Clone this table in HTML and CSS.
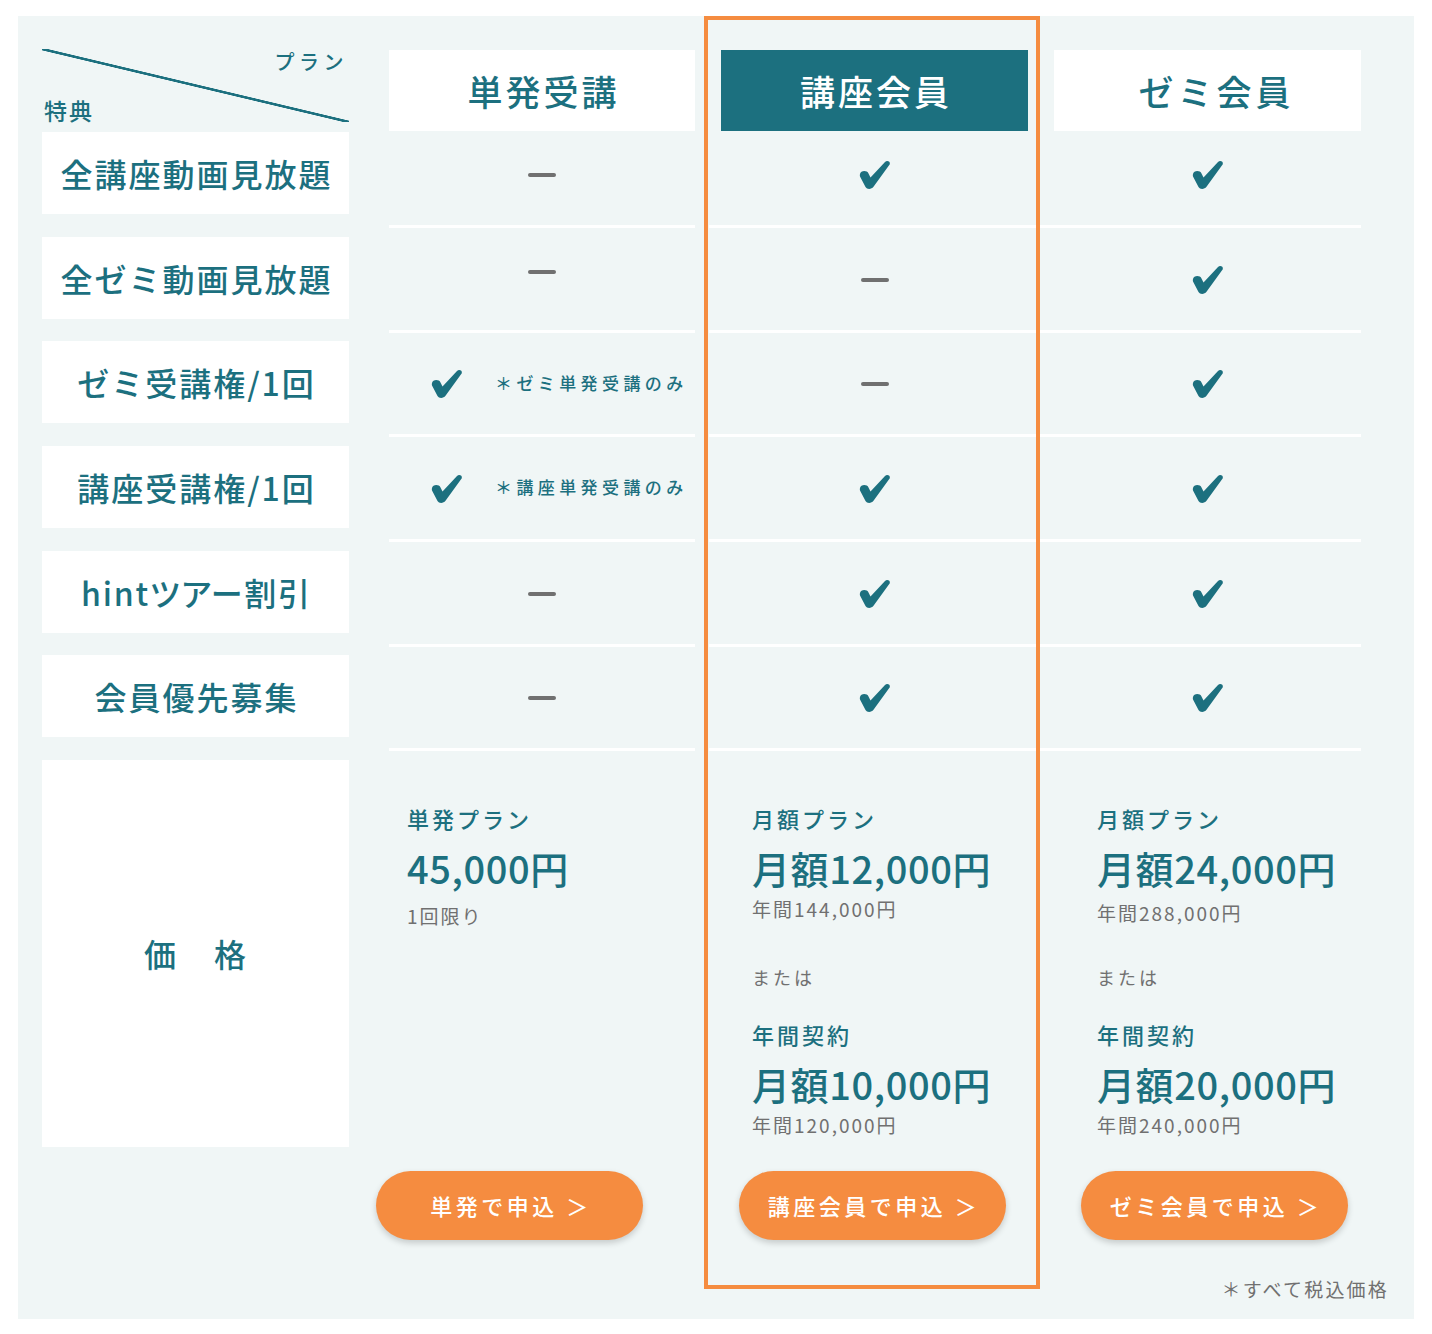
FILE: index.html
```html
<!DOCTYPE html>
<html lang="ja">
<head>
<meta charset="utf-8">
<title>プラン比較</title>
<link rel="stylesheet" href="styles.css">
</head>
<body>
<div class="panel">
  <div class="grid">
    <div class="corner"><span class="corner-plan">プラン</span><span class="corner-perk">特典</span></div>
    <div class="plan-head">単発受講</div>
    <div class="plan-head plan-head--active">講座会員</div>
    <div class="plan-head plan-head--last">ゼミ会員</div>

    <div class="perk">全講座動画見放題</div>
    <div class="cell"><span class="dash"></span></div>
    <div class="cell cell--mid"><svg class="check" viewBox="0 0 32 30"><path d="M1 14 C1.5 10.5 8 10 9.5 13.5 L11.5 17.5 L26 2 C28 0 31.5 1.5 30.8 4.2 L14.5 26.8 C12.5 29.5 8 29.7 6.5 27 L1 16.5 C0.7 15.8 0.8 14.8 1 14 Z"/></svg></div>
    <div class="cell"><svg class="check" viewBox="0 0 32 30"><path d="M1 14 C1.5 10.5 8 10 9.5 13.5 L11.5 17.5 L26 2 C28 0 31.5 1.5 30.8 4.2 L14.5 26.8 C12.5 29.5 8 29.7 6.5 27 L1 16.5 C0.7 15.8 0.8 14.8 1 14 Z"/></svg></div>

    <div class="perk">全ゼミ動画見放題</div>
    <div class="cell"><span class="dash dash--up"></span></div>
    <div class="cell cell--mid"><span class="dash"></span></div>
    <div class="cell"><svg class="check" viewBox="0 0 32 30"><path d="M1 14 C1.5 10.5 8 10 9.5 13.5 L11.5 17.5 L26 2 C28 0 31.5 1.5 30.8 4.2 L14.5 26.8 C12.5 29.5 8 29.7 6.5 27 L1 16.5 C0.7 15.8 0.8 14.8 1 14 Z"/></svg></div>

    <div class="perk">ゼミ受講権/1回</div>
    <div class="cell cell--note"><svg class="check" viewBox="0 0 32 30"><path d="M1 14 C1.5 10.5 8 10 9.5 13.5 L11.5 17.5 L26 2 C28 0 31.5 1.5 30.8 4.2 L14.5 26.8 C12.5 29.5 8 29.7 6.5 27 L1 16.5 C0.7 15.8 0.8 14.8 1 14 Z"/></svg><span class="note-text">＊ゼミ単発受講のみ</span></div>
    <div class="cell cell--mid"><span class="dash"></span></div>
    <div class="cell"><svg class="check" viewBox="0 0 32 30"><path d="M1 14 C1.5 10.5 8 10 9.5 13.5 L11.5 17.5 L26 2 C28 0 31.5 1.5 30.8 4.2 L14.5 26.8 C12.5 29.5 8 29.7 6.5 27 L1 16.5 C0.7 15.8 0.8 14.8 1 14 Z"/></svg></div>

    <div class="perk">講座受講権/1回</div>
    <div class="cell cell--note"><svg class="check" viewBox="0 0 32 30"><path d="M1 14 C1.5 10.5 8 10 9.5 13.5 L11.5 17.5 L26 2 C28 0 31.5 1.5 30.8 4.2 L14.5 26.8 C12.5 29.5 8 29.7 6.5 27 L1 16.5 C0.7 15.8 0.8 14.8 1 14 Z"/></svg><span class="note-text">＊講座単発受講のみ</span></div>
    <div class="cell cell--mid"><svg class="check" viewBox="0 0 32 30"><path d="M1 14 C1.5 10.5 8 10 9.5 13.5 L11.5 17.5 L26 2 C28 0 31.5 1.5 30.8 4.2 L14.5 26.8 C12.5 29.5 8 29.7 6.5 27 L1 16.5 C0.7 15.8 0.8 14.8 1 14 Z"/></svg></div>
    <div class="cell"><svg class="check" viewBox="0 0 32 30"><path d="M1 14 C1.5 10.5 8 10 9.5 13.5 L11.5 17.5 L26 2 C28 0 31.5 1.5 30.8 4.2 L14.5 26.8 C12.5 29.5 8 29.7 6.5 27 L1 16.5 C0.7 15.8 0.8 14.8 1 14 Z"/></svg></div>

    <div class="perk perk--latin">hintツアー割引</div>
    <div class="cell"><span class="dash"></span></div>
    <div class="cell cell--mid"><svg class="check" viewBox="0 0 32 30"><path d="M1 14 C1.5 10.5 8 10 9.5 13.5 L11.5 17.5 L26 2 C28 0 31.5 1.5 30.8 4.2 L14.5 26.8 C12.5 29.5 8 29.7 6.5 27 L1 16.5 C0.7 15.8 0.8 14.8 1 14 Z"/></svg></div>
    <div class="cell"><svg class="check" viewBox="0 0 32 30"><path d="M1 14 C1.5 10.5 8 10 9.5 13.5 L11.5 17.5 L26 2 C28 0 31.5 1.5 30.8 4.2 L14.5 26.8 C12.5 29.5 8 29.7 6.5 27 L1 16.5 C0.7 15.8 0.8 14.8 1 14 Z"/></svg></div>

    <div class="perk">会員優先募集</div>
    <div class="cell"><span class="dash"></span></div>
    <div class="cell cell--mid"><svg class="check" viewBox="0 0 32 30"><path d="M1 14 C1.5 10.5 8 10 9.5 13.5 L11.5 17.5 L26 2 C28 0 31.5 1.5 30.8 4.2 L14.5 26.8 C12.5 29.5 8 29.7 6.5 27 L1 16.5 C0.7 15.8 0.8 14.8 1 14 Z"/></svg></div>
    <div class="cell"><svg class="check" viewBox="0 0 32 30"><path d="M1 14 C1.5 10.5 8 10 9.5 13.5 L11.5 17.5 L26 2 C28 0 31.5 1.5 30.8 4.2 L14.5 26.8 C12.5 29.5 8 29.7 6.5 27 L1 16.5 C0.7 15.8 0.8 14.8 1 14 Z"/></svg></div>

    <div class="perk perk--price">価　格</div>
    <div class="price price--1">
      <div class="price-label">単発プラン</div>
      <div class="price-value">45,000円</div>
      <div class="price-sub price-sub--once">1回限り</div>
    </div>
    <div class="price price--2">
      <div class="price-label">月額プラン</div>
      <div class="price-value">月額12,000円</div>
      <div class="price-sub">年間144,000円</div>
      <div class="price-or">または</div>
      <div class="price-label price-label--annual">年間契約</div>
      <div class="price-value">月額10,000円</div>
      <div class="price-sub">年間120,000円</div>
    </div>
    <div class="price price--3">
      <div class="price-label">月額プラン</div>
      <div class="price-value">月額24,000円</div>
      <div class="price-sub price-sub--lower">年間288,000円</div>
      <div class="price-or price-or--tight">または</div>
      <div class="price-label price-label--annual">年間契約</div>
      <div class="price-value">月額20,000円</div>
      <div class="price-sub">年間240,000円</div>
    </div>

    <div class="btn-cell btn-cell--1"><a class="btn btn--1" href="#">単発で申込 ＞</a></div>
    <div class="btn-cell btn-cell--2"><a class="btn btn--2" href="#">講座会員で申込 ＞</a></div>
    <div class="btn-cell btn-cell--3"><a class="btn btn--3" href="#">ゼミ会員で申込 ＞</a></div>

    <p class="footnote">＊すべて税込価格</p>
  </div>
  <div class="highlight"></div>
</div>
</body>
</html>
```

FILE: styles.css
```css
* { box-sizing: border-box; }

body {
  margin: 0;
  background: #ffffff;
  font-family: "Noto Sans CJK JP", "Noto Sans", sans-serif;
  color: #1c707f;
}

.panel {
  position: relative;
  width: 1396px;
  height: 1303px;
  margin: 16px 18px 0;
  padding: 33px 53px 0 24px;
  background: #f0f6f6;
}

.grid {
  display: grid;
  grid-template-columns: 321px 306px 307px 307px;
  grid-template-rows: 83px repeat(6, 104.67px) auto auto auto;
  column-gap: 26px;
}

.corner {
  width: 307px;
  height: 73px;
  display: flex;
  flex-direction: column;
  justify-content: space-between;
  background: linear-gradient(to top right,
    transparent calc(50% - 1.6px),
    #1c707f calc(50% - 1px),
    #1c707f calc(50% + 1px),
    transparent calc(50% + 1.6px));
}

.corner-plan {
  align-self: flex-end;
  margin: 2px 1px 0 0;
  font-size: 20px;
  line-height: 22px;
  letter-spacing: 4.5px;
  font-weight: 500;
}

.corner-perk {
  margin-left: 2px;
  font-size: 23px;
  line-height: 24px;
  letter-spacing: 2px;
  font-weight: 500;
}

.plan-head {
  margin-top: 1px;
  height: 81px;
  display: flex;
  align-items: center;
  justify-content: center;
  padding-left: 3px;
  background: #ffffff;
  font-size: 35px;
  letter-spacing: 3px;
  font-weight: 500;
}

.plan-head--active {
  background: #1c707f;
  color: #ffffff;
}

.plan-head--last {
  padding-left: 18px;
  letter-spacing: 4px;
}

.perk {
  align-self: start;
  width: 307px;
  height: 82px;
  display: flex;
  align-items: center;
  justify-content: center;
  padding-left: 2px;
  background: #ffffff;
  font-size: 32px;
  letter-spacing: 2px;
  font-weight: 500;
}

.perk--latin {
  font-feature-settings: "palt";
  letter-spacing: 1.8px;
}

.perk--price {
  height: 387px;
  letter-spacing: 3px;
}

.cell {
  align-self: start;
  height: 96px;
  padding-bottom: 11px;
  border-bottom: 3px solid #ffffff;
  display: flex;
  align-items: center;
  justify-content: center;
}

.cell--mid {
  margin-left: -12px;
  margin-right: -26px;
  padding-right: 14px;
}

.cell--note {
  justify-content: flex-start;
  padding-left: 42px;
}

.note-text {
  margin-left: 32px;
  font-size: 17px;
  letter-spacing: 4.4px;
  font-weight: 500;
}

.check {
  width: 32px;
  height: 30px;
  margin-top: 4px;
  fill: #1c707f;
  flex: none;
}

.dash {
  width: 28px;
  height: 4px;
  margin-top: 4px;
  border-radius: 2px;
  background: #707070;
}

.dash--up {
  margin-top: 0;
  margin-bottom: 12px;
}

.price {
  align-self: start;
  padding-top: 43px;
}

.price--1 { padding-left: 18px; }
.price--2 { padding-left: 31px; }
.price--3 { padding-left: 43px; }

.price-label {
  font-size: 22px;
  line-height: 30px;
  letter-spacing: 3px;
  font-weight: 500;
}

.price-label--annual { margin-top: 30px; }

.price-value {
  margin-top: 10px;
  font-size: 38px;
  line-height: 50px;
  letter-spacing: 0.6px;
  font-weight: 500;
}

.price-sub {
  margin-top: 4px;
  font-size: 19px;
  line-height: 24px;
  letter-spacing: 2px;
  color: #707070;
}

.price-sub--once { margin-top: 11px; }
.price-sub--lower { margin-top: 8px; }

.price-or {
  margin-top: 44px;
  font-size: 18px;
  line-height: 24px;
  letter-spacing: 3px;
  color: #707070;
}

.price-or--tight { margin-top: 40px; }

.btn-cell--1 { grid-column: 2; }
.btn-cell--2 { grid-column: 3; }
.btn-cell--3 { grid-column: 4; }

.btn {
  display: flex;
  align-items: center;
  justify-content: center;
  width: 267px;
  height: 69px;
  margin-top: 24px;
  padding-left: 3px;
  border-radius: 35px;
  background: #f58c40;
  color: #ffffff;
  font-size: 22px;
  letter-spacing: 3.5px;
  font-weight: 500;
  text-decoration: none;
  box-shadow: 0 3px 6px rgba(0, 0, 0, 0.18);
}

.btn--1 { margin-left: -13px; }
.btn--2 { margin-left: 18px; }
.btn--3 { margin-left: 27px; }

.footnote {
  grid-column: 1 / -1;
  justify-self: end;
  margin: 37px -28px 0 0;
  font-size: 19px;
  line-height: 24px;
  letter-spacing: 2.2px;
  color: #707070;
}

.highlight {
  position: absolute;
  left: 686px;
  top: 0;
  width: 336px;
  height: 1273px;
  border: 4px solid #f58c40;
  pointer-events: none;
}
```
